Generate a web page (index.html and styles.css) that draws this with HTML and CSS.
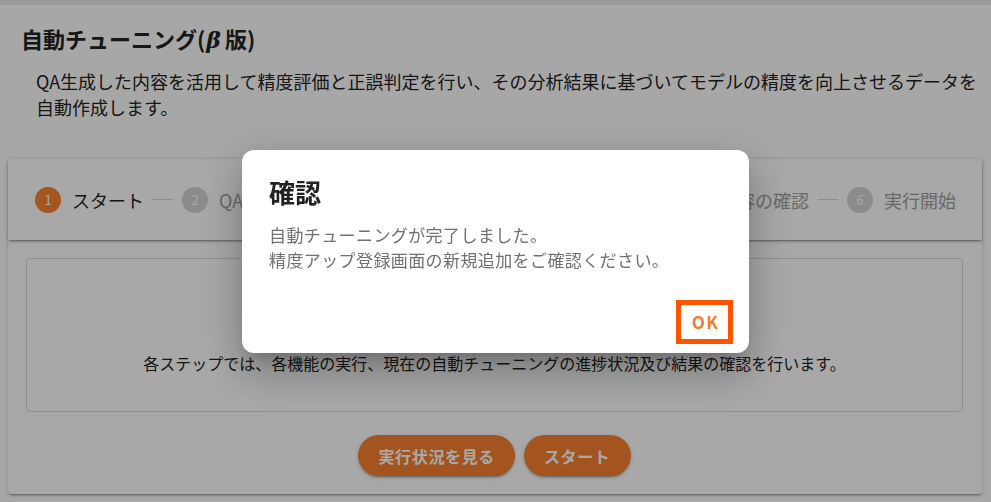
FILE: index.html
```html
<!DOCTYPE html>
<html lang="ja">
<head>
<meta charset="utf-8">
<title>自動チューニング(β版)</title>
<link rel="stylesheet" href="styles.css">
</head>
<body>
<div class="topbar"></div>
<main class="page">
  <h1 class="page-title">自動チューニング(<i class="beta">β</i>版)</h1>
  <p class="page-desc">QA生成した内容を活用して精度評価と正誤判定を行い、その分析結果に基づいてモデルの精度を向上させるデータを自動作成します。</p>

  <section class="card">
    <div class="stepper-header">
      <div class="step step--active"><span class="step-num">1</span><span class="step-label">スタート</span></div>
      <div class="divider"></div>
      <div class="step"><span class="step-num">2</span><span class="step-label">QA生成</span></div>
      <div class="divider"></div>
      <div class="step"><span class="step-num">3</span><span class="step-label">精度評価</span></div>
      <div class="divider divider--grow"></div>
      <div class="step"><span class="step-num">4</span><span class="step-label">正誤判定</span></div>
      <div class="divider"></div>
      <div class="step"><span class="step-num">5</span><span class="step-label">データ内容の確認</span></div>
      <div class="divider"></div>
      <div class="step"><span class="step-num">6</span><span class="step-label">実行開始</span></div>
    </div>
    <div class="card-body">
      <div class="info-box">
        <p class="info-text">各ステップでは、各機能の実行、現在の自動チューニングの進捗状況及び結果の確認を行います。</p>
      </div>
      <div class="actions">
        <button class="btn">実行状況を見る</button>
        <button class="btn">スタート</button>
      </div>
    </div>
  </section>
</main>

<div class="overlay">
  <div class="dialog" role="dialog">
    <h2 class="dialog-title">確認</h2>
    <p class="dialog-text">自動チューニングが完了しました。<br>精度アップ登録画面の新規追加をご確認ください。</p>
    <div class="dialog-actions">
      <button class="ok-btn">OK</button>
    </div>
  </div>
</div>
</body>
</html>
```

FILE: styles.css
```css
* { box-sizing: border-box; }

html, body {
  margin: 0;
  padding: 0;
  height: 100%;
}

body {
  background: #fdfdfd;
  font-family: "Noto Sans CJK JP", "Noto Sans", sans-serif;
  color: #222;
  overflow: hidden;
}

.topbar {
  height: 5px;
  background: #e8e8e8;
}

.page {
  padding: 0 9px 0 8px;
}

.page-title {
  margin: 17px 0 0 13px;
  font-size: 22px;
  line-height: 32px;
  font-weight: 700;
  color: #222;
}

.beta {
  font-style: italic;
  font-family: "DejaVu Serif", serif;
  font-weight: 700;
  margin: 0 4px 0 1px;
}

.page-desc {
  margin: 12px 0 0 28px;
  font-size: 18px;
  line-height: 26px;
  color: #222;
}

.card {
  margin-top: 39px;
  background: #fff;
  border-radius: 4px;
  box-shadow: 0 3px 1px -2px rgba(0,0,0,.2), 0 2px 2px 0 rgba(0,0,0,.14), 0 1px 5px 0 rgba(0,0,0,.12);
}

.stepper-header {
  height: 81px;
  padding: 0 26px 0 27px;
  display: flex;
  align-items: center;
  box-shadow: 0 3px 1px -2px rgba(0,0,0,.2), 0 2px 2px 0 rgba(0,0,0,.14), 0 1px 5px 0 rgba(0,0,0,.12);
  position: relative;
}

.step {
  display: flex;
  align-items: center;
  flex: none;
}

.step-num {
  width: 26px;
  height: 26px;
  border-radius: 50%;
  background: #d4d4d4;
  color: #fff;
  font-size: 13px;
  line-height: 26px;
  text-align: center;
  margin-right: 11px;
}

.step--active .step-num {
  background: #fa8130;
}

.step-label {
  font-size: 18px;
  line-height: 26px;
  color: #9e9e9e;
  white-space: nowrap;
}

.step--active .step-label {
  color: #222;
}

.divider {
  flex: 0 0 20px;
  height: 1px;
  background: #d6d6d6;
  margin: 0 9px 0 9px;
}

.divider--grow {
  flex: 1 1 20px;
}

.card-body {
  padding: 18px 19px 18px 18px;
}

.info-box {
  border: 1px solid #d8d8d8;
  border-radius: 4px;
  padding: 92px 16px 36px;
  height: 154px;
}

.info-text {
  margin: 0;
  text-align: center;
  font-size: 16px;
  line-height: 24px;
  color: #222;
}

.actions {
  margin-top: 23px;
  display: flex;
  justify-content: center;
  gap: 9px;
}

.btn {
  height: 41px;
  border: none;
  border-radius: 21px;
  background: #f9802f;
  color: #fff;
  font-family: "Noto Sans CJK JP", sans-serif;
  font-size: 16px;
  font-weight: 700;
  letter-spacing: .04em;
  padding: 0 20px;
  box-shadow: 0 3px 1px -2px rgba(0,0,0,.2), 0 2px 2px 0 rgba(0,0,0,.14), 0 1px 5px 0 rgba(0,0,0,.12);
}

.overlay {
  position: fixed;
  inset: 0;
  background: rgba(0,0,0,.34);
  display: flex;
  align-items: center;
  justify-content: center;
}

.dialog {
  width: 507px;
  height: 203px;
  background: #fff;
  border-radius: 12px;
  padding: 26px 16px 9px 27px;
  display: flex;
  flex-direction: column;
  box-shadow: 0 11px 15px -7px rgba(0,0,0,.2), 0 24px 38px 3px rgba(0,0,0,.14), 0 9px 46px 8px rgba(0,0,0,.12);
}

.dialog-title {
  margin: 0;
  font-size: 26px;
  line-height: 32px;
  font-weight: 700;
  color: #222;
}

.dialog-text {
  margin: 14px 0 0;
  font-size: 17px;
  line-height: 25px;
  letter-spacing: .4px;
  color: #707070;
}

.dialog-actions {
  margin-top: auto;
  display: flex;
  justify-content: flex-end;
}

.ok-btn {
  width: 57px;
  height: 44px;
  border: 5px solid #ff5500;
  background: #fff;
  color: #f47a30;
  font-family: "Noto Sans CJK JP", sans-serif;
  font-size: 17px;
  font-weight: 700;
  letter-spacing: .08em;
  padding: 0 0 0 2px;
}
```
